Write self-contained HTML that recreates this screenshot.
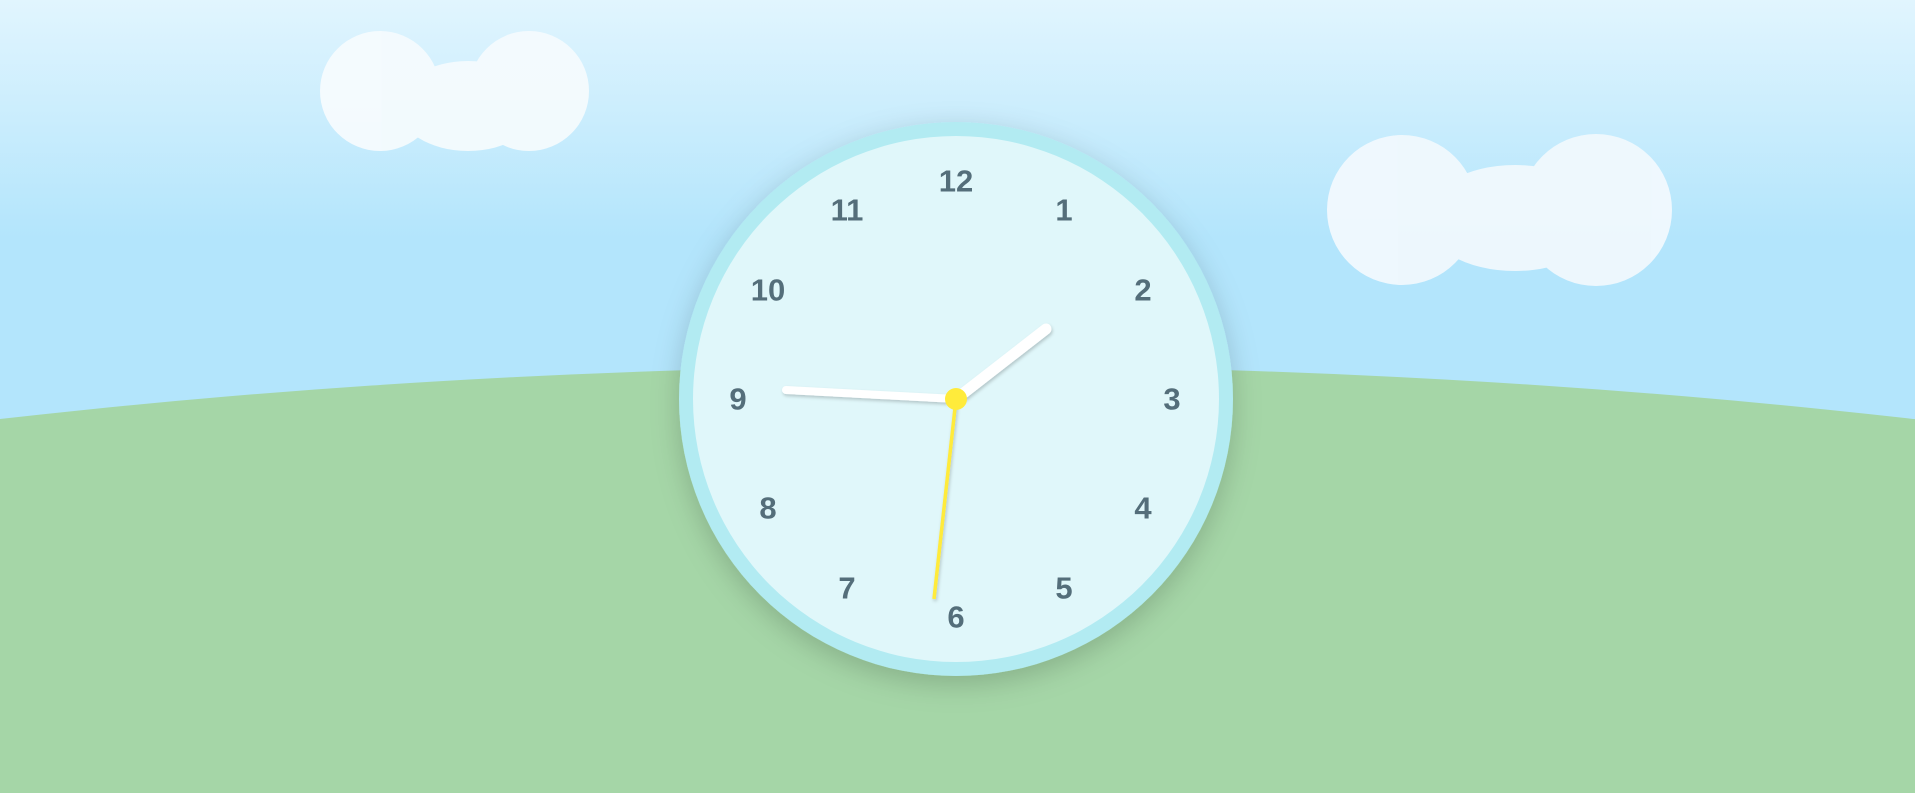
<!DOCTYPE html>
<html><head><meta charset="utf-8"><style>
html,body{margin:0;padding:0;width:1915px;height:793px;overflow:hidden}
svg{display:block}
</style></head><body>
<svg width="1915" height="793" viewBox="0 0 1915 793" xmlns="http://www.w3.org/2000/svg">
<defs>
<linearGradient id="sky" x1="0" y1="0" x2="0" y2="1">
<stop offset="0" stop-color="#e1f5fe"/>
<stop offset="0.3" stop-color="#b3e5fc"/>
<stop offset="1" stop-color="#b3e5fc"/>
</linearGradient>
<filter id="sh" x="-30%" y="-30%" width="160%" height="160%">
<feDropShadow dx="0" dy="8" stdDeviation="14" flood-color="#000" flood-opacity="0.18"/>
</filter>
<filter id="hs" x="-30%" y="-30%" width="160%" height="160%">
<feDropShadow dx="1" dy="2" stdDeviation="1.5" flood-color="#000" flood-opacity="0.2"/>
</filter>
</defs>
<rect width="1915" height="793" fill="url(#sky)"/>
<ellipse cx="957" cy="1381" rx="3000" ry="1015" fill="#a5d6a7"/>
<g fill="#f5fbfe" opacity="0.95">
<circle cx="380" cy="91" r="60"/>
<circle cx="529" cy="91" r="60"/>
<ellipse cx="468" cy="106" rx="70" ry="45"/>
</g>
<g fill="#f1f9fe" opacity="0.95">
<circle cx="1402" cy="210" r="75"/>
<circle cx="1596" cy="210" r="76"/>
<ellipse cx="1515" cy="218" rx="90" ry="53"/>
</g>
<circle cx="956" cy="399" r="277" fill="#b2ebf2" filter="url(#sh)"/>
<circle cx="956" cy="399" r="263" fill="#e0f7fa"/>
<g font-family="Liberation Sans, sans-serif" font-weight="bold" font-size="31" fill="#546e7a" text-anchor="middle" dominant-baseline="central">
<text x="956" y="181">12</text>
<text x="1064" y="210">1</text>
<text x="1143" y="290">2</text>
<text x="1172" y="399">3</text>
<text x="1143" y="508">4</text>
<text x="1064" y="588">5</text>
<text x="956" y="617">6</text>
<text x="847" y="588">7</text>
<text x="768" y="508">8</text>
<text x="738" y="399">9</text>
<text x="768" y="290">10</text>
<text x="847" y="210">11</text>
</g>
<g filter="url(#hs)" stroke-linecap="round">
<line x1="956" y1="399" x2="1046" y2="329" stroke="#ffffff" stroke-width="11"/>
<line x1="956" y1="399" x2="786" y2="390" stroke="#ffffff" stroke-width="8"/>
<line x1="956" y1="399" x2="934" y2="599" stroke="#ffeb3b" stroke-width="3.5" stroke-linecap="butt"/>
</g>
<circle cx="956" cy="399" r="11" fill="#ffeb3b"/>
</svg>
</body></html>
